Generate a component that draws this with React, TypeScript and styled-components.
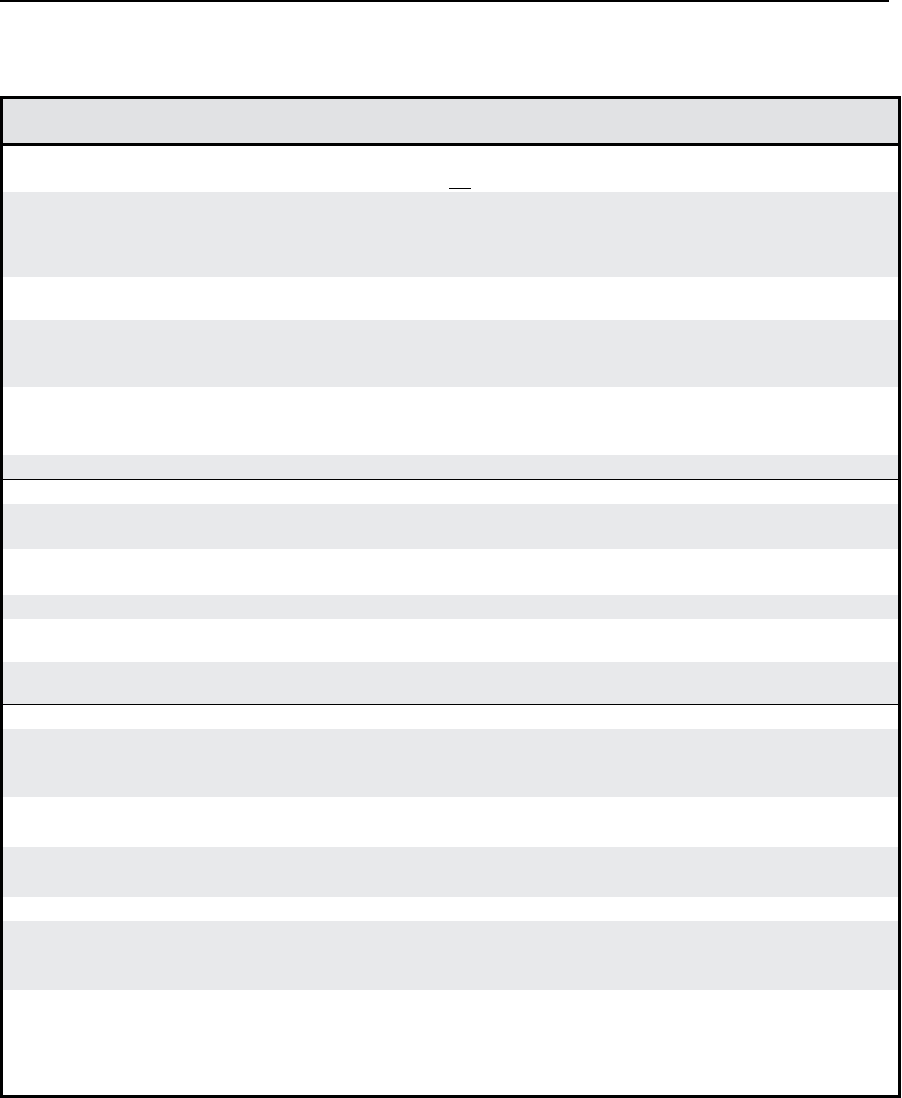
import styled, { createGlobalStyle } from 'styled-components';

const GlobalStyle = createGlobalStyle`
  html, body {
    margin: 0;
    padding: 0;
    background: #ffffff;
    font-family: "Liberation Sans", Arial, sans-serif;
  }
`;

const Page = styled.div`
  display: flex;
  flex-direction: column;
  width: 902px;
`;

const TopRule = styled.div`
  width: 889px;
  height: 2px;
  background: #000;
  margin-bottom: 94px;
`;

const Table = styled.div`
  display: flex;
  flex-direction: column;
  width: 901px;
  box-sizing: border-box;
  border: 3px solid #000;
`;

const Header = styled.div`
  height: 44px;
  background: #e1e2e4;
  border-bottom: 3px solid #000;
`;

const Section = styled.div<{ $divider: boolean }>`
  display: flex;
  flex-direction: column;
  border-top: ${p => (p.$divider ? '1px solid #000' : 'none')};
`;

const Row = styled.div<{ $striped: boolean }>`
  display: flex;
  align-items: flex-end;
  box-sizing: border-box;
  background: ${p => (p.$striped ? '#e8e9eb' : '#ffffff')};
`;

// blank underline left in the first row of the table
const Blank = styled.span`
  display: block;
  width: 22px;
  height: 1px;
  background: #000;
  margin: 0 0 3px 446px;
`;

// row heights, one list per section
const sections: number[][] = [
  [46, 85, 43, 67, 68, 24],
  [24, 45, 46, 24, 43, 42],
  [24, 68, 50, 50, 24, 69, 105],
];

export default function App() {
  return (
    <>
      <GlobalStyle />
      <Page>
        <TopRule />
        <Table>
          <Header />
          {sections.map((rows, s) => (
            <Section key={s} $divider={s > 0}>
              {rows.map((h, i) => (
                <Row key={i} $striped={i % 2 === 1} style={{ height: h }}>
                  {s === 0 && i === 0 && <Blank />}
                </Row>
              ))}
            </Section>
          ))}
        </Table>
      </Page>
    </>
  );
}
